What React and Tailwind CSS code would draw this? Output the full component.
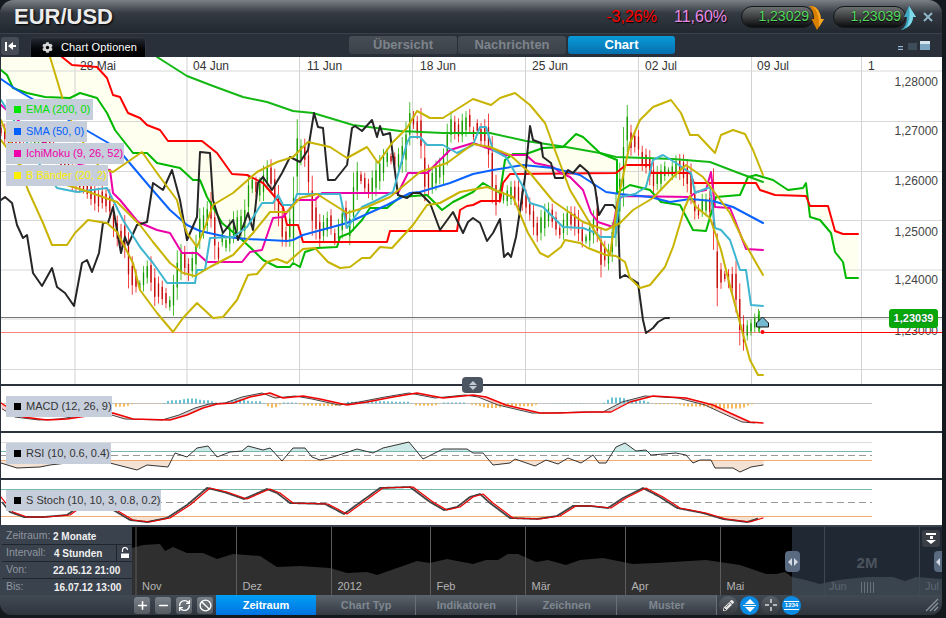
import { FaCog, FaPencilAlt } from "react-icons/fa";
import { Plus, Minus, RefreshCw, Ban } from "lucide-react";

/* -------------- CHART DATA (page coordinates) -------------- */
const EMA = [[157,57],[187,76],[213,86],[243,97],[267,102],[293,111],[313,113],[353,125],[400,131],[443,133],[490,133],[526,141],[566,147],[600,153],[616,157],[673,159],[710,162],[736,172],[763,182]];
const SPAN_B = [[1,70],[7,75],[13,88],[27,93],[45,97],[70,98],[80,93],[97,98],[107,113],[115,130],[133,153],[147,153],[157,163],[180,168],[193,180],[200,180],[207,197],[213,207],[222,223],[240,238],[253,250],[263,260],[277,267],[290,267],[293,263],[300,267],[305,252],[317,248],[337,247],[340,237],[350,233],[362,220],[370,208],[387,208],[400,197],[427,195],[442,210],[453,202],[473,192],[483,183],[500,193],[505,160],[513,154],[526,154],[543,148],[563,147],[576,134],[583,137],[600,153],[617,160],[617,193],[630,185],[650,190],[661,202],[680,205],[693,230],[706,231],[716,197],[740,195],[748,177],[756,175],[773,180],[788,190],[803,188],[806,183],[808,200],[810,217],[820,220],[831,233],[835,252],[843,262],[846,278],[858,278]];
const SPAN_A = [[62,57],[72,65],[97,67],[107,78],[113,95],[120,97],[128,113],[140,118],[147,125],[160,130],[168,141],[202,141],[217,153],[232,174],[247,175],[263,183],[275,197],[283,207],[287,225],[298,225],[303,242],[387,242],[390,231],[457,231],[460,210],[467,206],[473,205],[481,201],[500,201],[503,183],[510,174],[616,173],[626,165],[650,165],[651,173],[690,173],[694,183],[756,183],[760,190],[775,195],[806,196],[810,206],[828,206],[835,231],[843,234],[858,234]];
const SMA = [[1,79],[17,90],[60,115],[117,148],[133,167],[150,187],[170,210],[187,225],[200,231],[227,237],[247,239],[287,241],[293,240],[303,235],[347,223],[387,205],[410,193],[420,192],[450,183],[473,174],[493,170],[523,165],[553,168],[580,175],[606,192],[620,194],[650,197],[670,202],[690,199],[713,201],[733,207],[763,223]];
const PRICE = [[1,200],[5,197],[12,203],[17,225],[23,238],[27,235],[33,273],[42,286],[52,268],[57,287],[65,293],[74,306],[82,263],[87,260],[92,272],[99,253],[103,223],[108,223],[113,207],[121,253],[125,237],[128,245],[137,225],[147,222],[153,183],[163,190],[172,170],[180,200],[187,240],[197,217],[200,152],[210,153],[213,200],[223,233],[233,220],[238,240],[248,213],[253,230],[258,183],[263,177],[272,190],[282,173],[290,157],[300,162],[308,150],[314,113],[318,127],[323,128],[328,180],[335,180],[347,165],[352,128],[355,126],[362,131],[372,120],[377,137],[380,126],[383,135],[390,133],[398,195],[407,198],[413,193],[420,193],[430,203],[440,230],[453,212],[463,233],[468,222],[473,218],[480,223],[487,241],[493,233],[500,219],[504,257],[508,253],[511,257],[516,237],[525,177],[530,126],[533,140],[541,143],[543,157],[551,163],[555,178],[563,178],[568,170],[573,173],[580,165],[588,172],[595,187],[599,215],[605,205],[613,205],[618,212],[620,278],[625,275],[638,283],[643,320],[646,333],[653,328],[658,322],[665,318],[669,318]];
const BAND_LOW = [[1,120],[15,155],[28,190],[43,223],[52,245],[67,245],[75,233],[88,220],[107,223],[117,232],[133,263],[140,290],[157,313],[173,332],[183,318],[197,303],[213,318],[223,317],[237,300],[248,275],[257,274],[267,262],[277,259],[287,263],[303,249],[315,248],[328,262],[340,268],[350,267],[362,258],[370,258],[380,247],[392,248],[413,225],[427,205],[440,203],[460,192],[487,187],[513,197],[528,233],[540,253],[548,257],[561,247],[565,240],[580,243],[588,248],[606,255],[616,256],[625,262],[630,278],[640,288],[650,285],[665,267],[673,247],[685,207],[690,196],[696,207],[710,218],[721,250],[731,290],[740,323],[750,360],[758,375],[763,375]];
const BAND_MID = [[1,140],[20,165],[50,180],[83,190],[117,202],[140,225],[153,242],[170,263],[183,273],[195,276],[210,267],[233,255],[253,233],[270,212],[287,212],[300,198],[317,194],[347,213],[367,207],[390,197],[420,172],[447,163],[473,144],[490,147],[510,155],[530,173],[553,201],[583,222],[606,230],[620,223],[633,210],[653,198],[673,177],[686,165],[703,177],[718,197],[730,213],[743,240],[763,275]];
const BAND_UP = [[50,57],[57,80],[63,100],[75,130],[100,168],[113,172],[142,152],[157,173],[177,200],[180,213],[187,233],[197,247],[205,227],[213,205],[233,193],[257,172],[277,162],[293,157],[308,142],[330,147],[347,158],[367,147],[378,163],[392,143],[407,128],[417,111],[430,118],[443,118],[473,99],[491,105],[500,98],[515,93],[530,105],[545,123],[556,153],[570,190],[585,215],[600,240],[610,255],[618,200],[630,143],[640,120],[653,107],[671,100],[681,113],[690,135],[698,135],[715,153],[721,135],[733,130],[745,134],[753,150],[763,175]];
const TENKAN = [[1,100],[20,130],[40,165],[57,188],[77,192],[107,188],[113,200],[123,220],[140,247],[153,263],[167,283],[195,283],[197,270],[205,270],[210,238],[233,237],[247,227],[262,203],[273,203],[278,195],[283,205],[293,205],[297,194],[340,194],[347,228],[362,207],[373,202],[393,192],[407,143],[410,137],[420,137],[427,145],[443,145],[457,153],[473,145],[480,127],[486,127],[493,150],[506,157],[525,190],[530,203],[543,207],[553,217],[563,227],[583,228],[596,233],[600,237],[615,237],[620,197],[635,194],[646,187],[653,160],[663,155],[676,163],[686,170],[691,173],[695,193],[710,187],[715,228],[721,230],[730,240],[740,270],[746,270],[751,305],[763,306]];
const KIJUN = [[1,105],[40,140],[80,165],[110,170],[113,193],[120,200],[138,222],[157,230],[170,233],[182,253],[197,253],[207,262],[242,262],[250,252],[262,250],[273,218],[283,217],[297,200],[315,200],[322,193],[398,193],[408,173],[427,173],[450,150],[473,143],[493,150],[506,155],[526,155],[535,163],[553,167],[561,173],[570,177],[583,190],[591,213],[598,222],[613,227],[618,200],[623,196],[690,197],[696,192],[706,190],[711,172],[715,207],[730,208],[736,223],[746,249],[763,250]];
const MACD = [[1,403],[23,417],[47,420],[67,419],[87,416],[113,413],[133,419],[170,420],[187,415],[203,408],[217,404],[233,403],[250,397],[270,393],[283,398],[303,396],[320,399],[347,405],[367,402],[393,397],[417,393],[443,398],[473,395],[486,397],[506,405],[540,413],[560,413],[590,412],[611,412],[630,402],[653,396],[686,398],[713,405],[730,413],[750,422],[763,423]];
const RSI = [[1,463],[17,468],[40,467],[50,465],[67,463],[110,463],[137,470],[147,465],[168,467],[175,453],[187,457],[197,448],[208,446],[217,457],[230,452],[242,451],[248,446],[263,450],[270,448],[282,461],[293,448],[305,448],[312,457],[320,460],[333,457],[357,449],[373,453],[383,448],[409,442],[423,459],[443,449],[467,449],[473,453],[483,453],[493,465],[510,463],[515,459],[535,466],[546,460],[558,464],[568,458],[581,463],[593,455],[599,463],[606,463],[616,447],[625,443],[636,451],[646,450],[651,455],[676,453],[686,455],[693,463],[700,460],[711,460],[715,468],[733,468],[740,472],[751,467],[763,465]];
const STOCH = [[1,497],[13,512],[27,517],[47,517],[70,515],[80,508],[113,508],[133,520],[150,522],[170,518],[190,505],[210,488],[227,492],[247,499],[270,489],[280,493],[293,503],[328,504],[347,514],[383,488],[413,487],[433,502],[447,510],[460,507],[473,497],[483,494],[493,503],[513,518],[540,519],[560,516],[576,506],[593,506],[611,508],[626,498],[646,488],[663,497],[680,508],[706,513],[726,519],[750,522],[763,518]];
const NAV = [[132,548],[143,545],[160,544],[165,551],[173,547],[187,553],[203,553],[217,559],[233,554],[260,556],[277,567],[300,566],[330,568],[347,573],[367,572],[377,575],[400,567],[417,561],[430,563],[447,559],[473,564],[486,560],[498,560],[508,554],[518,554],[536,562],[548,560],[566,565],[580,560],[603,558],[633,564],[656,563],[706,560],[740,565],[766,574],[776,574],[785,572],[792,577]];
const NAV_AHEAD = [[792,577],[806,580],[820,584],[838,580],[866,577],[893,577],[905,581],[916,577],[942,579]];

const GRID_X = [75, 187, 299.5, 412.5, 525.5, 638.5, 751.5, 861.5];
const GRID_Y = [71, 121.5, 171.5, 220.5, 270, 319, 369.5];
const DATES = [["28 Mai",80],["04 Jun",193],["11 Jun",307],["18 Jun",420],["25 Jun",532],["02 Jul",645],["09 Jul",757],["1",868]];
const PRICES = [["1,28000",86],["1,27000",135],["1,26000",185],["1,25000",236],["1,24000",284]];
const NAV_MONTHS = [["Nov",136],["Dez",236.5],["2012",331.5],["Feb",430.5],["Mär",525.5],["Apr",625.5],["Mai",720.5]];

const pts = (list) => list.map((p) => p.join(",")).join(" ");

const at = (list, x) => {
  if (x <= list[0][0]) return list[0][1];
  for (let i = 1; i < list.length; i++) {
    if (x <= list[i][0]) {
      const [x0, y0] = list[i - 1];
      const [x1, y1] = list[i];
      return x1 === x0 ? y1 : y0 + ((y1 - y0) * (x - x0)) / (x1 - x0);
    }
  }
  return list[list.length - 1][1];
};

/* candles follow the lagging price line, 26 bars further right */
const OLD_PRICE = [[-97,130],[-75,150],[-50,140],[-25,175],[1,200]];
const priceAt = (x) => (x < 1 ? at(OLD_PRICE, x) : at(PRICE, x));
const candles = [];
for (let i = 0; i * 3.75 < 758; i++) {
  const x = i * 3.75 + 1;
  const mid = priceAt(x - 97.5);
  const slope = priceAt(x - 93.5) - priceAt(x - 101.5);
  const noise = Math.abs(Math.sin(i * 12.9898)) * 8;
  const wick = 4 + noise + Math.abs(slope) * 0.4;
  candles.push({ x, top: mid - wick, bottom: mid + wick, bodyTop: mid - wick / 2, bodyBottom: mid + wick / 2, up: slope < 0 });
}
candles.push({ x: 759.5, top: 311, bottom: 333, bodyTop: 322, bodyBottom: 329, up: true });

const steps = (from, to) => Array.from({ length: to - from + 1 }, (_, i) => from + i);

function Line({ data, color, width = 2 }) {
  return <polyline points={pts(data)} fill="none" stroke={color} strokeWidth={width} strokeLinejoin="round" strokeLinecap="round" />;
}

function Legend({ color, text, label, width }) {
  return (
    <div className={`flex h-[21px] items-center gap-[5px] bg-[#c6cedb] pl-2 text-[11px] ${width} ${text}`}>
      <span className={`h-[7px] w-[7px] ${color}`} />
      {label}
    </div>
  );
}

/* -------------- MAIN PRICE PANEL -------------- */
function PricePanel() {
  const cloud = [[1,57], ...SPAN_A, ...[...SPAN_B].reverse()];
  return (
    <div className="relative h-[327px] w-[941px] bg-white">
      <svg viewBox="1 57 941 327" className="block h-full w-full font-['Liberation_Sans']">
        <polygon points={pts(cloud)} fill="#fffff0" />
        {GRID_X.map((x) => <line key={x} x1={x} x2={x} y1={57} y2={384} stroke="#d2d2d2" />)}
        {GRID_Y.map((y) => <line key={y} x1={1} x2={942} y1={y} y2={y} stroke="#d8d8d8" />)}
        {DATES.map(([t, x]) => <text key={t} x={x} y={70} fontSize="12" fill="#333">{t}</text>)}
        {PRICES.map(([t, y]) => <text key={t} x={938} y={y} fontSize="12" fill="#444" textAnchor="end">{t}</text>)}
        <text x={938} y={335} fontSize="12" fill="#444" textAnchor="end">1,23000</text>
        <line x1={1} x2={942} y1={317.5} y2={317.5} stroke="#777" />
        <line x1={1} x2={763} y1={332.5} y2={332.5} stroke="#ff8080" />
        <line x1={763} x2={942} y1={332.5} y2={332.5} stroke="#ff0000" />
        {candles.map((c) => (
          <g key={c.x} stroke={c.up ? "#1fae00" : "#ee1111"}>
            <line x1={c.x} x2={c.x} y1={c.top} y2={c.bottom} strokeWidth="0.8" />
            <line x1={c.x} x2={c.x} y1={c.bodyTop} y2={c.bodyBottom} strokeWidth="1.3" stroke={c.up ? "#139a00" : "#c00808"} />
          </g>
        ))}
        <Line data={EMA} color="#14b814" />
        <Line data={SPAN_B} color="#00b800" />
        <Line data={SPAN_A} color="#ff0000" />
        <Line data={KIJUN} color="#ec00a8" />
        <Line data={SMA} color="#0a63ff" />
        <Line data={PRICE} color="#262626" />
        <Line data={TENKAN} color="#3fb6cf" />
        <Line data={BAND_MID} color="#c8b400" />
        <Line data={BAND_UP} color="#c8b400" />
        <Line data={BAND_LOW} color="#c8b400" />
        <circle cx={762.5} cy={332} r={2} fill="#ff0000" />
        <path d="M762.5 317 L768.5 323 V327 H756.5 V323 Z" fill="#74b9cf" stroke="#111" strokeWidth="1" />
      </svg>
      <div className="absolute left-[5px] top-[42px] flex flex-col gap-px">
        <Legend color="bg-[#00e600]" text="text-[#00e000]" label="EMA (200, 0)" width="w-[87px]" />
        <Legend color="bg-[#0060ff]" text="text-[#0060ff]" label="SMA (50, 0)" width="w-[81px]" />
        <Legend color="bg-[#ee00aa]" text="text-[#ee00aa]" label="IchiMoku (9, 26, 52)" width="w-[118px]" />
        <Legend color="bg-[#fff000]" text="text-[#fff000]" label="B Bänder (20, 2)" width="w-[102px]" />
      </div>
      <div className="absolute left-[888px] top-[252px] flex h-[19px] w-[49px] items-center justify-center rounded-[3px] bg-[#0aa80a] text-[11px] font-bold text-white [text-shadow:0_0_2px_#063]">
        1,23039
      </div>
      <div className="absolute left-[461px] top-[320px] z-10 flex h-[16px] w-[21px] flex-col items-center justify-center gap-px rounded-[4px] bg-[#4c5663]">
        <span className="h-0 w-0 border-x-[4px] border-b-[4px] border-x-transparent border-b-[#c3c9d0]" />
        <span className="h-0 w-0 border-x-[4px] border-t-[4px] border-x-transparent border-t-[#c3c9d0]" />
      </div>
    </div>
  );
}

/* -------------- INDICATOR PANELS -------------- */
function MacdPanel() {
  const lead = (x) => at(MACD, x + 8);
  const xs = steps(2, 755);
  return (
    <div className="relative h-[45px] w-[941px] bg-white">
      <svg viewBox="1 386 941 45" className="block h-full w-full">
        <line x1={1} x2={872} y1={403.5} y2={403.5} stroke="#c4c4c4" />
        {xs.map((x) => {
          const a = lead(x);
          const b = at(MACD, x);
          return <line key={x} x1={x} x2={x} y1={a} y2={b} stroke={a < b ? "#c4c4c4" : "#fbbcbc"} />;
        })}
        {xs.filter((x) => x % 4 === 0 && x > 112).map((x) => {
          const d = Math.max(-7, Math.min(7, (at(MACD, x) - lead(x)) * 1.4));
          return (
            <line key={x} x1={x} x2={x} y1={403.5} y2={403.5 - d} strokeWidth="1.5" stroke={d > 0 ? "#35adc2" : "#f5a623"} />
          );
        })}
        <polyline points={pts(xs.map((x) => [x, lead(x)]))} fill="none" stroke="#444" strokeWidth="1" />
        <Line data={MACD} color="#f00000" width={1.4} />
      </svg>
      <div className="absolute left-[5px] top-[10px]">
        <Legend color="bg-black" text="text-[#333]" label="MACD (12, 26, 9)" width="w-[106px]" />
      </div>
    </div>
  );
}

function RsiPanel() {
  return (
    <div className="relative h-[45px] w-[941px] bg-white">
      <svg viewBox="1 433 941 45" className="block h-full w-full">
        {steps(2, 763).map((x) => {
          const y = at(RSI, x);
          if (y < 451.5) return <line key={x} x1={x} x2={x} y1={y} y2={451.5} stroke="#bde3e1" />;
          if (y > 460) return <line key={x} x1={x} x2={x} y1={460} y2={y} stroke="#f0d8c6" />;
          return null;
        })}
        <line x1={1} x2={872} y1={442.5} y2={442.5} stroke="#dcdcdc" />
        <line x1={1} x2={872} y1={451.5} y2={451.5} stroke="#79b9ae" />
        <line x1={1} x2={872} y1={455.5} y2={455.5} stroke="#999" strokeDasharray="7 4" />
        <line x1={1} x2={872} y1={460.5} y2={460.5} stroke="#f0aa70" />
        <Line data={RSI} color="#333" width={1} />
      </svg>
      <div className="absolute left-[5px] top-[10px]">
        <Legend color="bg-black" text="text-[#333]" label="RSI (10, 0.6, 0.4)" width="w-[105px]" />
      </div>
    </div>
  );
}

function StochPanel() {
  const xs = steps(2, 758);
  return (
    <div className="relative h-[45px] w-[941px] bg-white">
      <svg viewBox="1 480 941 45" className="block h-full w-full">
        {steps(2, 763).map((x) => {
          const y = at(STOCH, x);
          return y > 516.5 ? <line key={x} x1={x} x2={x} y1={516.5} y2={y} stroke="#f0d8c6" /> : null;
        })}
        <line x1={1} x2={872} y1={489.5} y2={489.5} stroke="#79b9ae" />
        <line x1={1} x2={872} y1={502.5} y2={502.5} stroke="#999" strokeDasharray="7 4" />
        <line x1={1} x2={872} y1={516.5} y2={516.5} stroke="#f0aa70" />
        <polyline points={pts(xs.map((x) => [x, at(STOCH, x + 3)]))} fill="none" stroke="#444" strokeWidth="1.8" />
        <Line data={STOCH} color="#f00000" width={1.2} />
      </svg>
      <div className="absolute left-[5px] top-[10px]">
        <Legend color="bg-black" text="text-[#333]" label="S Stoch (10, 10, 3, 0.8, 0.2)" width="w-[155px]" />
      </div>
    </div>
  );
}

/* -------------- HEADER -------------- */
function Pill({ value, up }) {
  return (
    <div className="relative flex h-[22px] w-[73px] items-center justify-end rounded-full border border-[#15181b] bg-gradient-to-b from-[#6e7172] via-[#3d3f40] to-[#0c0d0e] pr-[4px]">
      <span className="text-[14px] text-[#55d95f] [text-shadow:0_1px_1px_#000]">{value}</span>
      {up ? (
        <svg viewBox="0 0 16 24" className="absolute -right-[12px] -top-px h-[24px] w-[16px]">
          <path d="M8 0 L15 11 H12 Q12 20 1 24 H0 Q6 20 6 11 H3 Z" fill="#3fa9c4" />
          <path d="M8 0 L15 11 H12 Q12 18 5 22 Q10 14 8 0 Z" fill="#7fd8e8" />
        </svg>
      ) : (
        <svg viewBox="0 0 16 24" className="absolute -right-[12px] -top-px h-[24px] w-[16px]">
          <path d="M0 0 H3 Q11 2 12 13 H15 L8 24 L2.5 13 H5 Q5 4 0 0 Z" fill="#d97f00" />
          <path d="M3 0 Q11 2 12 13 H15 L10 21 Q11 6 3 0 Z" fill="#f5a623" />
        </svg>
      )}
    </div>
  );
}

function Header() {
  return (
    <div className="flex h-[34px] shrink-0 items-center border-b border-[#3b424b] bg-gradient-to-b from-[#7b8085] via-[#343a42] via-40% to-[#22282f]">
      <span className="ml-[14px] text-[22px] font-bold leading-none text-[#ececec] [text-shadow:1px_1px_2px_#000]">EUR/USD</span>
      <span className="ml-auto text-[16px] text-[#ff0000] [text-shadow:1px_1px_1px_#000]">-3,26%</span>
      <span className="ml-[17px] text-[16px] text-[#e88ae8] [text-shadow:1px_1px_1px_#000]">11,60%</span>
      <div className="ml-[14px] flex gap-[19px]">
        <Pill value="1,23029" />
        <Pill value="1,23039" up />
      </div>
      <svg viewBox="0 0 10 10" className="ml-[17px] mr-[9px] h-[10px] w-[10px]">
        <path d="M1 1 L9 9 M9 1 L1 9" stroke="#8fb4c8" strokeWidth="2" />
      </svg>
    </div>
  );
}

function TabBar() {
  return (
    <div className="relative flex h-[23px] shrink-0 items-end bg-[#29303a]">
      <div className="mb-[2px] ml-px flex h-[18px] w-[18px] items-center justify-center gap-px rounded-[3px] bg-[#454c55]">
        <span className="h-[9px] w-[2px] bg-white" />
        <span className="h-0 w-0 border-y-[4px] border-r-[5px] border-y-transparent border-r-white" />
        <span className="-ml-px h-[2px] w-[3px] bg-white" />
      </div>
      <div className="ml-[11px] flex h-[20px] w-[116px] items-center gap-[8px] rounded-t-[4px] border-x border-t border-[#2f3843] bg-gradient-to-b from-[#262b33] to-black pl-[11px] text-[11px] tracking-[0.1px] text-white">
        <FaCog className="h-[11px] w-[11px] text-[#d8d8d8]" />
        Chart Optionen
      </div>
      <div className="absolute left-[349px] top-[2px] flex gap-px text-[13px] font-bold">
        <div className="flex h-[18px] w-[108px] items-center justify-center rounded-[3px] bg-gradient-to-b from-[#474d55] to-[#3c4249] text-[#7d848b]">Übersicht</div>
        <div className="flex h-[18px] w-[108px] items-center justify-center rounded-[3px] bg-gradient-to-b from-[#474d55] to-[#3c4249] text-[#7d848b]">Nachrichten</div>
        <div className="ml-px flex h-[18px] w-[107px] items-center justify-center rounded-[3px] bg-gradient-to-b from-[#0a9ad8] to-[#0670ae] text-white">Chart</div>
      </div>
      <div className="mb-[7px] ml-auto mr-[12px] flex items-end">
        <span className="h-[4px] w-[5px] border-y border-[#90b6cf] bg-[#3c4a58]" />
        <span className="ml-[5px] h-[7px] w-[9px] bg-[#3e4d5a]" />
        <span className="ml-[3px] h-[9px] w-[10px] border-t-[3px] border-[#d4e4ef] bg-[#7ba5c0]" />
      </div>
    </div>
  );
}

/* -------------- BOTTOM AREA -------------- */
function InfoRow({ label, value, valueGap, lock }) {
  return (
    <div className="flex h-[16px] items-center bg-[#3a424e] pl-[4px] text-[10px]">
      <span className="w-[46px] text-[10.5px] text-[#8f969f]">{label}</span>
      <span className={`font-bold text-[#f0f0f0] ${valueGap}`}>{value}</span>
      {lock && (
        <span className="ml-auto flex h-full w-[16px] items-center justify-center border-l border-[#1f252c]">
          <svg viewBox="0 0 10 12" className="h-[12px] w-[10px]">
            <path d="M2.5 5 V3 A2.5 2.5 0 0 1 7.5 3" fill="none" stroke="#fff" strokeWidth="1.2" />
            <rect x="1" y="6.5" width="8" height="4.5" fill="#fff" />
          </svg>
        </span>
      )}
    </div>
  );
}

function Navigator() {
  const area = [...NAV, [792,595], [132,595]];
  const ahead = [...NAV_AHEAD, [942,595], [792,595]];
  return (
    <div className="relative h-[68px] min-w-0 flex-1">
      <svg viewBox="132 527 810 68" className="block h-full w-full font-['Liberation_Sans']">
        <rect x="132" y="527" width="660" height="68" fill="#000" />
        <rect x="792" y="527" width="150" height="68" fill="#1f2833" />
        <polygon points={pts(area)} fill="#2f2f2f" />
        <polygon points={pts(ahead)} fill="#3a444e" />
        {NAV_MONTHS.map(([t, x]) => (
          <g key={t}>
            <line x1={x} x2={x} y1={527} y2={595} stroke="#5c5c5c" />
            <text x={x + 6} y={590} fontSize="11" fill="#b4b4b4">{t}</text>
          </g>
        ))}
        <line x1={824.5} x2={824.5} y1={527} y2={595} stroke="#3f4954" />
        <line x1={919.5} x2={919.5} y1={527} y2={595} stroke="#3f4954" />
        <text x={829} y={590} fontSize="11" fill="#5b6670">Jun</text>
        <text x={925} y={590} fontSize="11" fill="#5b6670">Jul</text>
        <text x={867} y={568} fontSize="15" fontWeight="bold" fill="#4b545e" textAnchor="middle">2M</text>
        {[861, 864, 867, 870, 873].map((x) => <line key={x} x1={x + 0.5} x2={x + 0.5} y1={582} y2={593} stroke="#67727d" />)}
      </svg>
      <div className="absolute left-[653px] top-[24px] flex h-[21px] w-[15px] items-center justify-center gap-[2px] rounded-[4px] bg-[#5a6a80]">
        <span className="h-0 w-0 border-y-[4px] border-r-[4px] border-y-transparent border-r-[#d5dbe2]" />
        <span className="h-0 w-0 border-y-[4px] border-l-[4px] border-y-transparent border-l-[#d5dbe2]" />
      </div>
      <div className="absolute right-0 top-[24px] flex h-[21px] w-[8px] items-center justify-center rounded-l-[4px] bg-[#5a6a80]">
        <span className="h-0 w-0 border-y-[4px] border-r-[4px] border-y-transparent border-r-[#d5dbe2]" />
      </div>
      <div className="absolute right-[2px] top-[3px] flex h-[17px] w-[18px] flex-col items-center justify-center gap-px rounded-[3px] bg-[#3a3f46]">
        <span className="h-[2px] w-[10px] bg-white" />
        <span className="h-[3px] w-[3px] bg-white" />
        <span className="h-0 w-0 border-x-[5px] border-t-[4px] border-x-transparent border-t-white" />
      </div>
    </div>
  );
}

function SquareButton({ icon: Icon, strokeWidth = 3 }) {
  return (
    <div className="flex h-[17px] w-[16px] items-center justify-center rounded-[3px] bg-gradient-to-b from-[#7b8188] to-[#555b63]">
      <Icon className="h-[13px] w-[13px] text-white" strokeWidth={strokeWidth} />
    </div>
  );
}

function ToolTab({ label, active }) {
  return active ? (
    <div className="flex h-full w-[100px] items-center justify-center bg-gradient-to-b from-[#009ff5] to-[#0072e0] text-[11px] font-bold text-white">{label}</div>
  ) : (
    <div className="flex h-full w-[100.25px] items-center justify-center border-r border-[#6a7078] bg-gradient-to-b from-[#5b636c] to-[#343a42] pl-px text-[11px] font-bold text-[#7f8790]">{label}</div>
  );
}

function Toolbar() {
  return (
    <div className="flex h-[20px] shrink-0 items-center bg-gradient-to-b from-[#414953] to-[#2e353d]">
      <div className="ml-[134px] flex gap-[5px]">
        <SquareButton icon={Plus} />
        <SquareButton icon={Minus} />
        <SquareButton icon={RefreshCw} strokeWidth={2.5} />
        <SquareButton icon={Ban} strokeWidth={2.5} />
      </div>
      <div className="ml-[3px] flex h-full">
        <ToolTab label="Zeitraum" active />
        <ToolTab label="Chart Typ" />
        <ToolTab label="Indikatoren" />
        <ToolTab label="Zeichnen" />
        <ToolTab label="Muster" />
      </div>
      <div className="ml-[2px] flex items-center gap-[2px]">
        <div className="flex h-[19px] w-[19px] items-center justify-center rounded-full bg-gradient-to-b from-[#5b6168] to-[#33383e]">
          <FaPencilAlt className="h-[11px] w-[11px] text-[#e6e6e6]" />
        </div>
        <div className="flex h-[19px] w-[19px] flex-col items-center justify-center gap-px rounded-full bg-[#0a8ce6]">
          <span className="h-0 w-0 border-x-[5px] border-b-[5px] border-x-transparent border-b-white" />
          <span className="h-[1px] w-[13px] bg-white" />
          <span className="h-0 w-0 border-x-[5px] border-t-[5px] border-x-transparent border-t-white" />
        </div>
        <div className="flex h-[19px] w-[19px] items-center justify-center rounded-full bg-gradient-to-b from-[#5b6168] to-[#33383e]">
          <svg viewBox="0 0 14 14" className="h-[14px] w-[14px]">
            <path d="M7 1 V5 M7 9 V13 M1 7 H5 M9 7 H13" stroke="#d8dde2" strokeWidth="1.5" />
          </svg>
        </div>
        <div className="flex h-[19px] w-[19px] flex-col items-center justify-center rounded-full bg-[#0a8ce6] text-[6px] font-bold leading-[7px] text-white">
          <span className="border-y border-white px-px">1234</span>
        </div>
      </div>
      <svg viewBox="0 0 14 14" className="ml-auto mr-[3px] h-[14px] w-[14px]">
        <path d="M1 13 L13 1 M5 13 L13 5 M9 13 L13 9" stroke="#8a929b" strokeWidth="1.3" />
      </svg>
    </div>
  );
}

export default function App() {
  return (
    <div className="h-[618px] w-[946px] overflow-hidden bg-[#14191e] font-['Liberation_Sans',Arial,sans-serif]">
      <div className="flex h-[615px] w-[942px] flex-col overflow-hidden rounded-b-[12px] rounded-t-[14px] bg-[#2b323b]">
        <Header />
        <TabBar />
        <div className="ml-px flex flex-col gap-[2px]">
          <PricePanel />
          <MacdPanel />
          <RsiPanel />
          <StochPanel />
        </div>
        <div className="flex h-[70px] shrink-0 items-end bg-[#39424d]">
          <div className="mb-0 ml-[2px] flex w-[130px] flex-col gap-px bg-[#20262d]">
            <InfoRow label="Zeitraum:" value="2 Monate" valueGap="ml-px" />
            <InfoRow label="Intervall:" value="4 Stunden" valueGap="ml-[2px]" lock />
            <InfoRow label="Von:" value="22.05.12 21:00" valueGap="ml-px" />
            <InfoRow label="Bis:" value="16.07.12 13:00" valueGap="ml-[2px]" />
          </div>
          <Navigator />
        </div>
        <Toolbar />
      </div>
    </div>
  );
}
